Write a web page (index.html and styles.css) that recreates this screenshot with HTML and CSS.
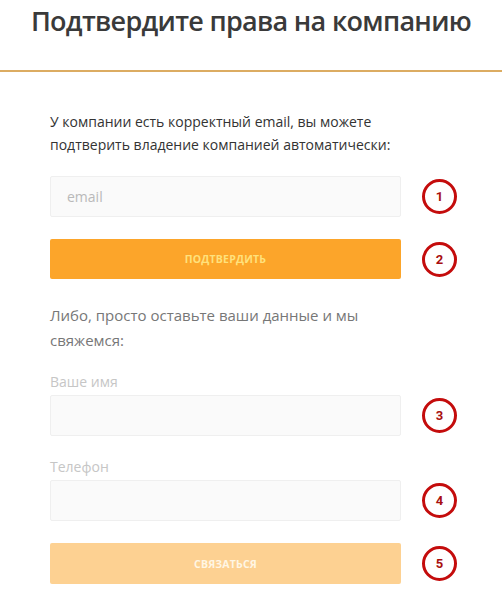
FILE: index.html
```html
<!DOCTYPE html>
<html lang="ru">
	<head>
		<meta charset="UTF-8">
		<title>Подтвердите права на компанию</title>
		<link rel="stylesheet" href="styles.css">
	</head>
	<body>
		<div class="head">
			<h1>Подтвердите права на компанию</h1>
		</div>
		<div class="form">
			<p class="lead">У компании есть корректный email, вы можете подтверить владение компанией автоматически:</p>
			<div class="row">
				<input type="text" class="field" placeholder="email" name="email"/>
				<span class="mark">1</span>
			</div>
			<div class="row gap">
				<button type="button" class="btn">ПОДТВЕРДИТЬ</button>
				<span class="mark">2</span>
			</div>
			<p class="alt">Либо, просто оставьте ваши данные и мы свяжемся:</p>
			<label class="label" for="name">Ваше имя</label>
			<div class="row">
				<input type="text" class="field" id="name" name="name"/>
				<span class="mark">3</span>
			</div>
			<label class="label second" for="phone">Телефон</label>
			<div class="row">
				<input type="text" class="field" id="phone" name="phone"/>
				<span class="mark">4</span>
			</div>
			<div class="row gap">
				<button type="button" class="btn pale">СВЯЗАТЬСЯ</button>
				<span class="mark">5</span>
			</div>
		</div>
	</body>
</html>
```

FILE: styles.css
```css
*{
	margin: 0;
	padding: 0;
	box-sizing: border-box;
}
body{
	background: #ffffff;
	font-family: "Open Sans", "Liberation Sans", sans-serif;
	color: #333333;
}
.head{
	height: 72px;
	border-bottom: 2px solid #dcac62;
}
.head h1{
	font-size: 27px;
	font-weight: 600;
	line-height: 42px;
	color: #3a3a3a;
	text-align: center;
	letter-spacing: -0.7px;
}
.form{
	padding: 38px 0 0 50px;
}
.lead{
	width: 360px;
	font-size: 14px;
	line-height: 23px;
	color: #333333;
	margin-bottom: 20px;
}
.row{
	display: flex;
	align-items: center;
}
.row.gap{
	margin-top: 22px;
}
.field{
	width: 351px;
	height: 41px;
	border: 1px solid #efefef;
	border-radius: 2px;
	background: #fafafa;
	padding-left: 16px;
	font-family: inherit;
	font-size: 14px;
	color: #333333;
	outline: none;
}
.field::placeholder{
	color: #b9b9b9;
}
.btn{
	width: 351px;
	height: 40px;
	border: none;
	border-radius: 2px;
	background: #fca52a;
	color: #ffe17c;
	font-family: inherit;
	font-size: 10.5px;
	font-weight: 700;
	letter-spacing: 0.2px;
}
.btn.pale{
	height: 41px;
	background: #fdd192;
	color: #fff6e4;
}
.mark{
	width: 35px;
	height: 35px;
	margin-left: 21px;
	border: 3px solid #c40c0c;
	border-radius: 50%;
	display: flex;
	align-items: center;
	justify-content: center;
	font-family: Roboto, "Liberation Sans", sans-serif;
	font-size: 13px;
	font-weight: 700;
	color: #a80f0f;
}
.alt{
	width: 330px;
	margin-top: 24px;
	font-size: 15px;
	line-height: 25px;
	color: #777777;
}
.label{
	display: block;
	margin-top: 19px;
	margin-bottom: 3px;
	font-size: 14px;
	line-height: 20px;
	color: #c6c6c6;
}
.label.second{
	margin-top: 21px;
}
```
